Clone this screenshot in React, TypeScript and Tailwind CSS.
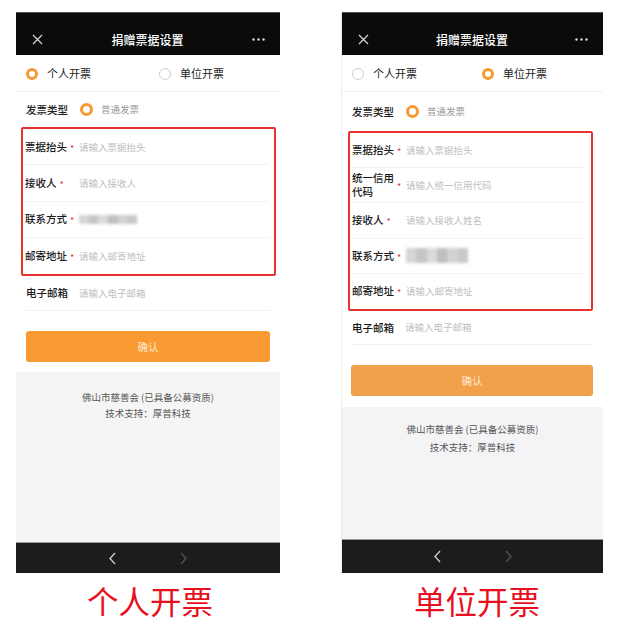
import { FC } from "react";

type Row = { label: string[]; placeholder?: string; blurred?: boolean };

type PhoneProps = {
  personal: boolean;
  width: string;
  rows: Row[];
  typeRowH: string;
  boxMargin: string;
  emailH: string;
  btnMargin: string;
  btnColor: string;
  grayTop: string;
  grayPad: string;
  barH: string;
  radioPad: string;
  radioFirst: string;
  rowH: string;
};

const Radio: FC<{ on: boolean; size?: string }> = ({ on, size = "w-[12px] h-[12px]" }) =>
  on ? (
    <span className={`${size} rounded-full border-[3.5px] border-[#f7982f] bg-white shrink-0`} />
  ) : (
    <span className={`${size} rounded-full border border-[#cfcfcf] bg-white shrink-0`} />
  );

const Star = () => <span className="text-[#e2323a] text-[9px] leading-none mt-[3px]">*</span>;

const Blur: FC<{ big?: boolean }> = ({ big }) => (
  <div className={`flex blur-[1.5px] ${big ? "h-[15px] w-[62px]" : "h-[9px] w-[58px]"}`}>
    <div className="flex-1 bg-[#d6d6d6]" />
    <div className="flex-1 bg-[#c4c4c4]" />
    <div className="flex-1 bg-[#dadada]" />
    <div className="flex-1 bg-[#bfbfbf]" />
    <div className="flex-1 bg-[#d2d2d2]" />
    <div className="flex-1 bg-[#c8c8c8]" />
  </div>
);

const Phone: FC<PhoneProps> = (p) => {
  return (
    <div className={`${p.width} h-[561px] flex flex-col bg-white`}>
      {/* top bar */}
      <div className="h-[43px] bg-[#0b0b0b] border-t border-[#555] flex items-center justify-between px-[15px] pt-[11px] shrink-0">
        <svg width="11" height="11" viewBox="0 0 11 11" className="ml-[1px]">
          <path d="M1 1 L10 10 M10 1 L1 10" stroke="#d8d8d8" strokeWidth="1.2" />
        </svg>
        <span className="text-white text-[12px] font-medium">捐赠票据设置</span>
        <svg width="13" height="3" viewBox="0 0 13 3">
          <circle cx="1.5" cy="1.5" r="1.2" fill="#d8d8d8" />
          <circle cx="6.5" cy="1.5" r="1.2" fill="#d8d8d8" />
          <circle cx="11.5" cy="1.5" r="1.2" fill="#d8d8d8" />
        </svg>
      </div>

      {/* invoice kind */}
      <div className={`h-[37px] flex items-center pt-[1px] border-b border-[#f0f0f0] ${p.radioPad} shrink-0`}>
        <div className={`${p.radioFirst} flex items-center gap-[9px]`}>
          <Radio on={p.personal} />
          <span className="text-[11px] text-[#222]">个人开票</span>
        </div>
        <div className="flex items-center gap-[9px]">
          <Radio on={!p.personal} />
          <span className="text-[11px] text-[#222]">单位开票</span>
        </div>
      </div>

      {/* invoice type */}
      <div className={`${p.typeRowH} flex items-center pl-[10px] shrink-0`}>
        <span className="text-[10.5px] font-medium text-[#222] w-[54px]">发票类型</span>
        <Radio on size="w-[13px] h-[13px]" />
        <span className="text-[9.5px] text-[#999] ml-[8px]">普通发票</span>
      </div>

      {/* required fields */}
      <div className={`${p.boxMargin} border-2 border-[#e8322f] rounded-[2px] flex flex-col shrink-0`}>
        {p.rows.map((r, i) => (
          <div
            key={i}
            className={`${p.rowH} flex items-center pl-[2px] mr-[5px] ${
              i < p.rows.length - 1 ? "border-b border-[#f2f2f2]" : ""
            }`}
          >
            <div className="w-[54px] flex items-center gap-[3px] shrink-0">
              <span className="text-[10.5px] font-medium text-[#1a1a1a] leading-[14px]">
                {r.label.map((l, j) => (
                  <span key={j} className="block">
                    {l}
                  </span>
                ))}
              </span>
              <Star />
            </div>
            {r.blurred ? (
              <Blur big={!p.personal} />
            ) : (
              <span className="text-[9.5px] text-[#c0c0c0]">{r.placeholder}</span>
            )}
          </div>
        ))}
      </div>

      {/* email */}
      <div className={`${p.emailH} flex items-center mx-[10px] border-b border-[#f0f0f0] shrink-0`}>
        <span className="text-[10.5px] font-medium text-[#1a1a1a] w-[53px]">电子邮箱</span>
        <span className="text-[9.5px] text-[#c0c0c0]">请输入电子邮箱</span>
      </div>

      <div
        className={`${p.btnMargin} mt-[20px] h-[31px] ${p.btnColor} rounded-[3px] flex items-center justify-center shrink-0`}
      >
        <span className="text-[10.5px] text-[#fde8cf]">确认</span>
      </div>

      {/* footer */}
      <div className={`${p.grayTop} flex-1 ${p.personal ? "bg-[#f5f5f5]" : "bg-[#f4f4f6]"} flex flex-col items-center ${p.grayPad}`}>
        <span className="text-[9.5px] text-[#555] leading-[16px]">佛山市慈善会 (已具备公募资质)</span>
        <span className={`text-[9.5px] text-[#555] leading-[16px] ${p.personal ? "" : "mt-[2px]"}`}>
          技术支持：厚普科技
        </span>
      </div>

      <div className={`${p.barH} bg-[#1c1c1e] border-t border-[#9a9a9a] flex items-center justify-center gap-[64px] shrink-0`}>
        <svg width="7" height="13" viewBox="0 0 7 13">
          <path d="M6 1 L1 6.5 L6 12" stroke="#cfcfcf" strokeWidth="1.3" fill="none" />
        </svg>
        <svg width="7" height="13" viewBox="0 0 7 13">
          <path d="M1 1 L6 6.5 L1 12" stroke="#555" strokeWidth="1.3" fill="none" />
        </svg>
      </div>
    </div>
  );
};

const App: FC = () => {
  return (
    <div
      className="w-[621px] h-[638px] bg-white flex pt-[12px] pl-[16px] gap-[61px]"
      style={{ fontFamily: '"Noto Sans CJK SC", "Noto Sans", sans-serif' }}
    >
      <div className="flex flex-col">
        <Phone
          personal
          width="w-[264px]"
          rows={[
            { label: ["票据抬头"], placeholder: "请输入票据抬头" },
            { label: ["接收人"], placeholder: "请输入接收人" },
            { label: ["联系方式"], blurred: true },
            { label: ["邮寄地址"], placeholder: "请输入邮寄地址" },
          ]}
          typeRowH="h-[35px]"
          boxMargin="ml-[5px] mr-[4px]"
          rowH="h-[36.25px]"
          emailH="h-[35px]"
          btnMargin="mx-[10px]"
          btnColor="bg-[#f99b32]"
          grayTop="mt-[10px]"
          grayPad="pt-[17px]"
          barH="h-[31px]"
          radioPad="pl-[10px]"
          radioFirst="w-[133px]"
        />
        <div className="text-center pl-[4px] mt-[7px] text-[31.5px] leading-[40px] text-[#e8101e]">个人开票</div>
      </div>
      <div className="flex flex-col">
        <Phone
          personal={false}
          width="w-[262px] border-l border-[#ededed]"
          rows={[
            { label: ["票据抬头"], placeholder: "请输入票据抬头" },
            { label: ["统一信用", "代码"], placeholder: "请输入统一信用代码" },
            { label: ["接收人"], placeholder: "请输入接收人姓名" },
            { label: ["联系方式"], blurred: true },
            { label: ["邮寄地址"], placeholder: "请输入邮寄地址" },
          ]}
          typeRowH="h-[39px]"
          boxMargin="ml-[6px] mr-[10px]"
          rowH="h-[35.2px]"
          emailH="h-[34px]"
          btnMargin="ml-[9px] mr-[10px]"
          btnColor="bg-[#f1a14b]"
          grayTop="mt-[11px]"
          grayPad="pt-[14px]"
          barH="h-[34px]"
          radioPad="pl-[10px]"
          radioFirst="w-[130px]"
        />
        <div className="text-center pl-[10px] mt-[7px] text-[31.5px] leading-[40px] text-[#e8101e]">单位开票</div>
      </div>
    </div>
  );
};

export default App;
